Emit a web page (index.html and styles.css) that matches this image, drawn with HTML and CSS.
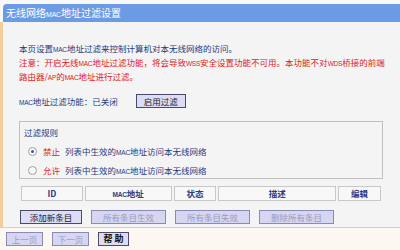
FILE: index.html
```html
<!DOCTYPE html>
<html lang="zh-CN">
<head>
  <meta charset="UTF-8" />
  <meta name="viewport" content="width=device-width, initial-scale=1" />
  <title>无线网络MAC地址过滤设置</title>
  <link rel="stylesheet" href="styles.css">
</head>
<body>

  <div class="title-bar">无线网络<span class="en">MAC</span>地址过滤设置</div>

  <div class="panel">
    <p class="intro">本页设置<span class="en">MAC</span>地址过滤来控制计算机对本无线网络的访问。</p>
    <p class="warn">注意：开启无线<span class="en">MAC</span>地址过滤功能，将会导致<span class="en">WSS</span>安全设置功能不可用。本功能不对<span class="en">WDS</span>桥接的前端<br>路由器/<span class="en">AP</span>的<span class="en">MAC</span>地址进行过滤。</p>

    <div class="status-row">
      <span><span class="en">MAC</span>地址过滤功能：已关闭</span>
      <button class="btn">启用过滤</button>
    </div>

    <div class="rules">
      <div class="rules-title">过滤规则</div>
      <div class="rule">
        <span class="radio checked"></span>
        <span class="red">禁止</span>
        <span>列表中生效的<span class="en">MAC</span>地址访问本无线网络</span>
      </div>
      <div class="rule">
        <span class="radio"></span>
        <span class="red">允许</span>
        <span>列表中生效的<span class="en">MAC</span>地址访问本无线网络</span>
      </div>
    </div>

    <table class="list">
      <tr>
        <th class="c-id">ID</th>
        <th class="c-mac"><span class="en">MAC</span>地址</th>
        <th class="c-state">状态</th>
        <th class="c-desc">描述</th>
        <th class="c-edit">编辑</th>
      </tr>
    </table>

    <div class="actions">
      <button class="btn w-add">添加新条目</button>
      <button class="btn off w-all">所有条目生效</button>
      <button class="btn off w-all">所有条目失效</button>
      <button class="btn off w-all">删除所有条目</button>
    </div>
  </div>

  <footer>
    <button class="btn off w-page">上一页</button>
    <button class="btn off w-page">下一页</button>
    <button class="btn help">帮 助</button>
  </footer>

</body>
</html>
```

FILE: styles.css
```css
body {
  margin: 0;
  font-family: "Noto Sans CJK SC", sans-serif;
  font-size: 8.5px;
  background-color: #f8f8f8;
  color: #243a80;
}

.en {
  font-family: "Liberation Sans", sans-serif;
  font-size: 6.5px;
  line-height: 1;
  letter-spacing: -0.2px;
}

.title-bar {
  margin: 4px 0 0 3px;
  height: 18px;
  line-height: 18px;
  padding-left: 3px;
  background: #6c9be6;
  color: white;
  font-size: 10px;
  border-radius: 4px 0 0 0;
  overflow: hidden;
}

.title-bar .en {
  font-size: 7px;
}

.panel {
  border-left: 3px solid #f2cd9e;
  background: #f4f4f4;
  padding: 19px 17px 3px 16px;
  border-bottom: 1px solid #f0c890;
}

p {
  margin: 0;
  height: 14px;
  line-height: 14px;
  white-space: nowrap;
}

.warn {
  height: 28px;
  color: #e0201c;
}

.status-row {
  margin-top: 11px;
  height: 14px;
  line-height: 14px;
  display: flex;
  align-items: center;
}

.status-row .btn {
  margin-left: 18px;
  width: 50px;
}

.btn {
  font-family: "Noto Sans CJK SC", sans-serif;
  font-size: 8.5px;
  height: 14px;
  line-height: 12px;
  padding: 0;
  background: #dcdcf4;
  border: 1px solid #4a4a6a;
  color: #1a1a2a;
  border-radius: 0;
}

.btn.off {
  color: #9a9ac0;
  border-color: #8a8ab4;
  background: #d6d6f2;
}

.rules {
  margin-top: 13px;
  height: 58px;
  box-sizing: border-box;
  border: 1px solid #c0c0c0;
  padding: 3px 0 0 8px;
}

.rules-title {
  height: 14px;
  line-height: 14px;
  margin-left: -4px;
}

.rule {
  margin-top: 5px;
  height: 14px;
  line-height: 14px;
  display: flex;
  align-items: center;
  gap: 5px;
}

.red {
  color: #e0201c;
  margin-left: 1px;
}

.radio {
  width: 7px;
  height: 7px;
  border: 1px solid #a0a0a0;
  border-radius: 50%;
  background: #f8f8f8;
  display: flex;
  align-items: center;
  justify-content: center;
}

.radio.checked::after {
  content: "";
  width: 3px;
  height: 3px;
  border-radius: 50%;
  background: #3a56a8;
}

.list {
  margin-top: 5px;
  border-spacing: 2px;
}

.list th {
  height: 15px;
  box-sizing: border-box;
  padding: 0;
  border: 1px solid #c8c8c8;
  background: #f8f8f8;
  font-weight: bold;
  font-size: 8.5px;
  color: #2a3c84;
  line-height: 13px;
}

.c-id { width: 62px; }
.c-mac { width: 87px; }
.c-state { width: 43px; }
.c-desc { width: 118px; }
.c-edit { width: 43px; }

.actions {
  margin-top: 7px;
  display: flex;
  gap: 9px;
  padding-left: 1px;
}

.w-add { width: 62px; }
.w-all { width: 75px; }

footer {
  background: #fcf7f0;
  padding: 4px 6px;
  display: flex;
  gap: 9px;
}

.w-page { width: 37px; }

.help {
  width: 31px;
  font-weight: bold;
  font-size: 9px;
  color: #111;
}
```
